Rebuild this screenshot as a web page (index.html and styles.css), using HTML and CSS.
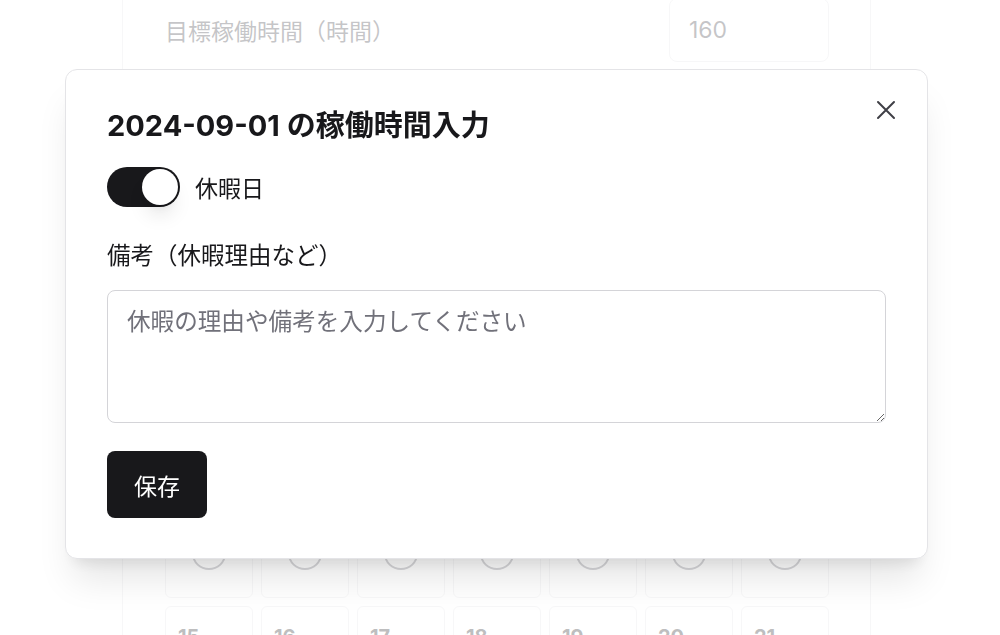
FILE: index.html
```html
<!DOCTYPE html>
<html lang="ja">
<head>
<meta charset="utf-8">
<title>稼働時間入力</title>
<link rel="stylesheet" href="styles.css">
</head>
<body>
<div class="page">
  <div class="card">
    <div class="setting-row">
      <label class="setting-label" for="target">目標稼働時間（時間）</label>
      <input id="target" class="setting-input" type="text" value="160">
    </div>
    <div class="calendar-section">
      <div class="weekdays">
        <span>日</span><span>月</span><span>火</span><span>水</span><span>木</span><span>金</span><span>土</span>
      </div>
      <div class="calendar">
        <div class="day"><span class="day-num">1</span><span class="day-check"></span></div>
        <div class="day"><span class="day-num">2</span><span class="day-check"></span></div>
        <div class="day"><span class="day-num">3</span><span class="day-check"></span></div>
        <div class="day"><span class="day-num">4</span><span class="day-check"></span></div>
        <div class="day"><span class="day-num">5</span><span class="day-check"></span></div>
        <div class="day"><span class="day-num">6</span><span class="day-check"></span></div>
        <div class="day"><span class="day-num">7</span><span class="day-check"></span></div>
        <div class="day"><span class="day-num">8</span><span class="day-check"></span></div>
        <div class="day"><span class="day-num">9</span><span class="day-check"></span></div>
        <div class="day"><span class="day-num">10</span><span class="day-check"></span></div>
        <div class="day"><span class="day-num">11</span><span class="day-check"></span></div>
        <div class="day"><span class="day-num">12</span><span class="day-check"></span></div>
        <div class="day"><span class="day-num">13</span><span class="day-check"></span></div>
        <div class="day"><span class="day-num">14</span><span class="day-check"></span></div>
        <div class="day"><span class="day-num">15</span><span class="day-check"></span></div>
        <div class="day"><span class="day-num">16</span><span class="day-check"></span></div>
        <div class="day"><span class="day-num">17</span><span class="day-check"></span></div>
        <div class="day"><span class="day-num">18</span><span class="day-check"></span></div>
        <div class="day"><span class="day-num">19</span><span class="day-check"></span></div>
        <div class="day"><span class="day-num">20</span><span class="day-check"></span></div>
        <div class="day"><span class="day-num">21</span><span class="day-check"></span></div>
      </div>
    </div>
  </div>
</div>

<div class="overlay"></div>

<div class="modal" role="dialog" aria-modal="true">
  <button class="close-btn" type="button" aria-label="閉じる">
    <svg width="24" height="24" viewBox="0 0 24 24" fill="none" stroke="currentColor" stroke-width="2" stroke-linecap="round">
      <path d="M4 4L20 20M20 4L4 20"/>
    </svg>
  </button>
  <h2 class="modal-title">2024-09-01 の稼働時間入力</h2>
  <div class="toggle-row">
    <span class="switch"><span class="knob"></span></span>
    <span class="toggle-label">休暇日</span>
  </div>
  <label class="field-label" for="note">備考（休暇理由など）</label>
  <textarea id="note" class="note" placeholder="休暇の理由や備考を入力してください"></textarea>
  <button class="save-btn" type="button">保存</button>
</div>
</body>
</html>
```
FILE: styles.css
```css
* {
  box-sizing: border-box;
}

html,
body {
  margin: 0;
  height: 100%;
  overflow: hidden;
}

body {
  font-family: "Inter", "Noto Sans CJK JP", sans-serif;
  background: #ffffff;
  color: #18181b;
}

/* ---------- background page ---------- */
.card {
  width: 749px;
  margin: -2px 0 0 122px;
  min-height: 900px;
  padding: 0 41px 0 42px;
  background: #ffffff;
  border-left: 1px solid #e4e4e7;
  border-right: 1px solid #e4e4e7;
}

.setting-row {
  display: flex;
  align-items: center;
  justify-content: space-between;
  height: 64px;
}

.setting-label {
  font-size: 23px;
  color: #3f3f46;
}

.setting-input {
  width: 160px;
  height: 64px;
  padding: 0 19px;
  border: 1px solid #e4e4e7;
  border-radius: 8px;
  font-family: "Inter", "Noto Sans CJK JP", sans-serif;
  font-size: 23px;
  color: #3f3f46;
  background: #ffffff;
}

.calendar-section {
  margin-top: 262px;
}

.weekdays {
  display: grid;
  grid-template-columns: repeat(7, 88px);
  gap: 8px;
  height: 24px;
  font-size: 18px;
  line-height: 24px;
  text-align: center;
  color: #52525b;
}

.calendar {
  display: grid;
  grid-template-columns: repeat(7, 88px);
  grid-auto-rows: 111px;
  gap: 8px;
  margin-top: 20px;
}

.day {
  display: flex;
  flex-direction: column;
  padding: 18px 12px 27px;
  border: 1px solid #e4e4e7;
  border-radius: 6px;
}

.day-num {
  font-size: 20px;
  font-weight: 700;
  line-height: 24px;
  color: #27272a;
}

.day-check {
  width: 34px;
  height: 34px;
  margin: 8px auto 0;
  border: 2px solid #7a7a82;
  border-radius: 50%;
}

/* ---------- overlay + modal ---------- */
.overlay {
  position: fixed;
  inset: 0;
  background: rgba(255, 255, 255, 0.7);
}

.modal {
  position: absolute;
  left: 65px;
  top: 69px;
  width: 863px;
  padding: 39px 41px 40px 41px;
  background: #ffffff;
  border: 1px solid #e4e4e7;
  border-radius: 12px;
  box-shadow: 0 28px 36px -8px rgba(0, 0, 0, 0.1), 0 12px 15px -9px rgba(0, 0, 0, 0.1);
}

.close-btn {
  position: absolute;
  top: 28px;
  right: 29px;
  width: 24px;
  height: 24px;
  padding: 0;
  border: 0;
  background: transparent;
  color: #3f3f46;
  display: flex;
}

.modal-title {
  margin: 0;
  font-size: 29px;
  line-height: 34px;
  font-weight: 700;
  color: #18181b;
}

.toggle-row {
  display: flex;
  align-items: center;
  margin-top: 24px;
  height: 40px;
}

.switch {
  display: flex;
  justify-content: flex-end;
  align-items: center;
  width: 73px;
  height: 40px;
  padding: 2px;
  border-radius: 20px;
  background: #18181b;
}

.knob {
  width: 36px;
  height: 36px;
  border-radius: 50%;
  background: #ffffff;
  box-shadow: 0 14px 20px -4px rgba(0, 0, 0, 0.1), 0 6px 8px -5px rgba(0, 0, 0, 0.1);
}

.toggle-label {
  margin-left: 15px;
  font-size: 23px;
  color: #18181b;
}

.field-label {
  display: block;
  margin-top: 33px;
  font-size: 23.5px;
  line-height: 32px;
  color: #18181b;
}

.note {
  display: block;
  width: 100%;
  height: 133px;
  margin-top: 18px;
  padding: 15px 19px;
  border: 1px solid #d4d4d8;
  border-radius: 8px;
  font-family: "Inter", "Noto Sans CJK JP", sans-serif;
  font-size: 23.6px;
  line-height: 32px;
  color: #18181b;
  background: #ffffff;
}

.note::placeholder {
  color: #71717a;
}

.save-btn {
  display: flex;
  align-items: center;
  justify-content: center;
  width: 100px;
  height: 67px;
  margin-top: 28px;
  padding: 0;
  border: 0;
  border-radius: 8px;
  background: #18181b;
  color: #ffffff;
  font-family: "Inter", "Noto Sans CJK JP", sans-serif;
  font-size: 23px;
}
```
